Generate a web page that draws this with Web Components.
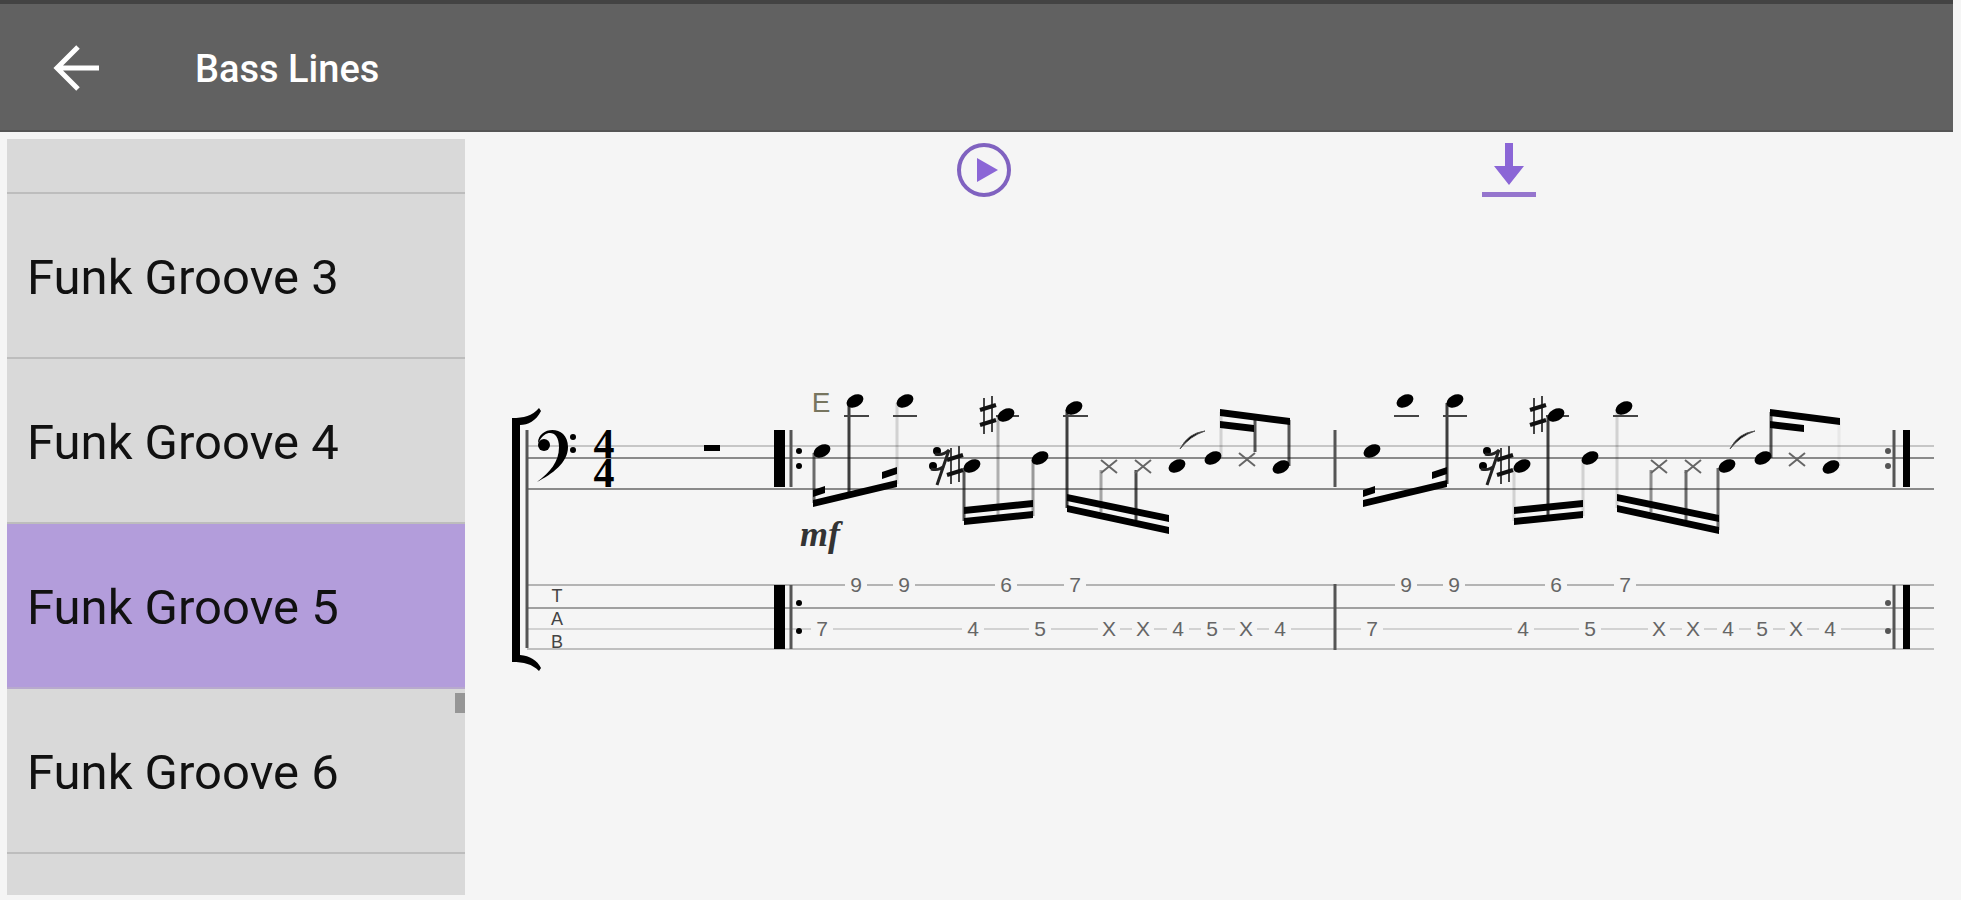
<!DOCTYPE html>
<html lang="en">
<head>
<meta charset="utf-8">
<title>Bass Lines</title>
<style>
  body { margin: 0; background: #f5f5f5; font-family: Roboto, "Liberation Sans", sans-serif; }
</style>
</head>
<body>
<bass-app></bass-app>

<script>
class AppHeader extends HTMLElement {
  constructor() {
    super();
    this.attachShadow({ mode: 'open' });
    this.shadowRoot.innerHTML = `
      <style>
        :host {
          display: flex;
          align-items: center;
          box-sizing: border-box;
          height: 132px;
          margin-right: 8px;
          padding: 4px 0 0 48px;
          gap: 91px;
          background: #616161;
          border-top: 4px solid #434343;
          border-bottom: 2px solid #555;
          color: #fff;
        }
        button { border: 0; padding: 0; background: none; width: 56px; height: 56px; }
        svg { display: block; }
        h1 { margin: 0; font-size: 38px; line-height: 44px; font-weight: 500; }
      </style>
      <button aria-label="Back">
        <svg width="56" height="56" viewBox="0 0 56 56" fill="none" stroke="#fff" stroke-width="5">
          <path d="M51 27H9M30 6L9 27l21 21"/>
        </svg>
      </button>
      <h1><slot></slot></h1>
    `;
  }
}

class GrooveItem extends HTMLElement {
  constructor() {
    super();
    this.attachShadow({ mode: 'open' });
    this.shadowRoot.innerHTML = `
      <style>
        :host { display: block; flex: none; border-bottom: 2px solid #bdbdbd; }
        :host([selected]) { background: #b39ddb; border-color: #b8aacd; }
        button {
          display: block;
          width: 100%;
          height: 163px;
          padding: 4px 20px 0;
          border: 0;
          background: none;
          color: #111;
          font: inherit;
          font-size: 49px;
          line-height: 56px;
          text-align: left;
        }
      </style>
      <button><slot></slot></button>
    `;
  }
}

class GrooveList extends HTMLElement {
  constructor() {
    super();
    this.attachShadow({ mode: 'open' });
    this.shadowRoot.innerHTML = `
      <style>
        :host {
          position: relative;
          display: flex;
          flex-direction: column;
          overflow: hidden;
          background: #d9d9d9;
        }
        .edge { flex: none; height: 53px; border-bottom: 2px solid #bdbdbd; }
        .thumb { position: absolute; right: 0; bottom: 182px; width: 10px; height: 20px; background: #969696; }
      </style>
      <div class="edge"></div>
      <slot></slot>
      <div class="thumb"></div>
    `;
  }
}

class PlayerTools extends HTMLElement {
  constructor() {
    super();
    this.attachShadow({ mode: 'open' });
    this.shadowRoot.innerHTML = `
      <style>
        :host { display: flex; justify-content: space-around; padding: 0 190px 0 256px; }
        button { border: 0; padding: 0; background: none; width: 60px; height: 62px; }
        svg { display: block; }
      </style>
      <button aria-label="Play">
        <svg width="60" height="62" viewBox="0 0 60 62">
          <circle cx="30" cy="31" r="25" fill="none" stroke="#8062c0" stroke-width="4"/>
          <path d="M23 19v24l21-12z" fill="#8b66d6"/>
        </svg>
      </button>
      <button aria-label="Download">
        <svg width="60" height="62" viewBox="0 0 60 62" fill="#8b66d6">
          <path d="M26 4h8v23h11L30 46 15 27h11z"/>
          <path d="M3 53h54v5H3z" fill="#9575cd"/>
        </svg>
      </button>
    `;
  }
}

// x offset of the second bar from the first
const BAR = 550;

// notehead centres, then x heads
const HEADS = [[822, 451], [855, 401], [905, 401], [972, 466], [1006, 415], [1040, 458],
  [1074, 408], [1177, 466], [1213, 458], [1281, 467]];
const GHOSTS = [[1109, 466], [1143, 466], [1247, 459]];

// x, top, bottom, opacity in bar 1, opacity in bar 2
const STEMS = [
  [814, 453, 503, .6, 0], [849, 401, 494, .8, 0], [897, 403, 484, .15, .8],
  [964, 468, 521, .7, .15], [998, 417, 516, .3, .8], [1033, 460, 516, .4, .15],
  [1067, 410, 508, .8, .15], [1101, 470, 512, .35, .45], [1136, 470, 520, .75, .6],
  [1168, 468, 530, 0, .6], [1221, 412, 458, .15, .7], [1255, 418, 452, .7, 0],
  [1289, 420, 466, .7, .05]
];

// x1, y1, x2, y2
const BEAMS = [
  [813, 503, 897, 483], [813, 493, 825, 489], [882, 475, 897, 470],
  [964, 510, 1033, 503], [964, 521, 1033, 514],
  [1067, 497, 1169, 518], [1067, 508, 1169, 530],
  [1220, 412, 1290, 421], [1220, 424, 1254, 428]
];

const LEDGERS = [[844, 869], [893, 917], [996, 1019], [1063, 1088]];

const FRETS = [[822, 1, '7'], [856, 0, '9'], [904, 0, '9'], [973, 1, '4'], [1006, 0, '6'],
  [1040, 1, '5'], [1075, 0, '7'], [1109, 1, 'X'], [1143, 1, 'X'], [1178, 1, '4'],
  [1212, 1, '5'], [1246, 1, 'X'], [1280, 1, '4']];

function sharp(x, y) {
  return `<g transform="translate(${x} ${y})">
    <path d="M-4 -17V19M4 -19V17" stroke="#444" stroke-width="2"/>
    <path d="M-8 -5L8 -10M-8 10L8 5" stroke="#111" stroke-width="4"/>
  </g>`;
}

function drawBar(index) {
  const stems = STEMS.map(s => `<path d="M${s[0]} ${s[1]}V${s[2]}" stroke="#111" stroke-width="3" opacity="${s[3 + index]}"/>`);
  const beams = BEAMS.map(([x1, y1, x2, y2]) => `<path d="M${x1} ${y1 - 3}L${x2} ${y2 - 3}V${y2 + 4}L${x1} ${y1 + 4}z"/>`);
  const ledgers = LEDGERS.map(([a, b]) => `<path d="M${a} 416H${b}" stroke="#444" stroke-width="2"/>`);
  const heads = HEADS.map(([x, y]) => `<ellipse rx="9" ry="6" transform="translate(${x} ${y}) rotate(-28)"/>`);
  const ghosts = GHOSTS.map(([x, y]) => `<path d="M${x - 8} ${y - 6}l16 13m0 -13l-16 13" stroke="#666" stroke-width="2"/>`);
  const frets = FRETS.map(([x, row, t]) => {
    const y = row ? 628 : 584;
    return `<path d="M${x - 11} ${y - 4}h22v9h-22z" fill="#f5f5f5"/>
      <text x="${x}" y="${y + 8}" class="fret">${t}</text>`;
  });
  return `<g transform="translate(${index * BAR} 0)">
    ${stems.join('')}${beams.join('')}${ledgers.join('')}${heads.join('')}${ghosts.join('')}
    ${sharp(988, 415)}${sharp(955, 465)}
    <circle cx="937" cy="451" r="4"/><circle cx="933" cy="466" r="4"/>
    <path d="M935 454Q943 456 949 450L937 485M931 469Q939 471 944 466" fill="none" stroke="#222" stroke-width="3"/>
    <path d="M1180 449Q1188 433 1205 431Q1190 436 1180 449z" stroke="#555"/>
    ${frets.join('')}
  </g>`;
}

class BassScore extends HTMLElement {
  constructor() {
    super();
    this.attachShadow({ mode: 'open' });
    const lines = [[446, .22], [458, .5], [489, .5], [585, .3], [608, .4], [629, .16], [649, .25]]
      .map(([y, o]) => `<path d="M527 ${y}H1934" stroke="#222" stroke-width="2" opacity="${o}"/>`).join('');
    this.shadowRoot.innerHTML = `
      <style>
        :host { display: block; }
        svg { display: block; width: 100%; height: auto; }
        text { text-anchor: middle; }
        .fret { font: 21px "Liberation Sans", sans-serif; fill: #666; }
        .chord { font: 28px "Liberation Sans", sans-serif; fill: #77755f; }
        .time { font: bold 42px "Liberation Serif", serif; }
        .dynamic { font: italic bold 36px "Liberation Serif", serif; fill: #333; }
        .tab { font: 18px "Liberation Sans", sans-serif; fill: #444; }
      </style>
      <svg viewBox="465 380 1496 300" role="img" aria-label="Funk Groove 5">
        ${lines}
        <path d="M512 418C524 418 532 416 539 408L541 411C536 421 528 425 520 425V655C530 656 537 660 541 668L539 671C532 664 524 662 512 662z"/>
        <path d="M527 430V648" stroke="#555" stroke-width="3"/>
        <circle cx="544" cy="445" r="6"/>
        <path d="M538 443C538 426 568 424 568 447C568 463 552 474 537 482C550 472 559 462 559 447C559 429 545 430 540 440z"/>
        <circle cx="573" cy="437" r="3"/><circle cx="573" cy="450" r="3"/>
        <text x="604" y="458" class="time">4</text>
        <text x="604" y="487" class="time">4</text>
        <path d="M704 445h16v6h-16z"/>
        <text x="557" y="602" class="tab">T</text>
        <text x="557" y="625" class="tab">A</text>
        <text x="557" y="648" class="tab">B</text>
        <path d="M774 430h11v57h-11zM774 585h11v64h-11z"/>
        <path d="M791 430v57M791 585v64M1335 430v57M1335 584v66M1894 430v57M1894 585v64" stroke="#555" stroke-width="3"/>
        <circle cx="799" cy="451" r="3"/><circle cx="799" cy="466" r="3"/>
        <circle cx="799" cy="603" r="3"/><circle cx="799" cy="631" r="3"/>
        <text x="821" y="412" class="chord">E</text>
        <text x="820" y="546" class="dynamic">mf</text>
        ${drawBar(0)}
        ${drawBar(1)}
        <path d="M1903 430h7v57h-7zM1903 585h7v64h-7z"/>
        <g fill="#555">
          <circle cx="1888" cy="451" r="3"/><circle cx="1888" cy="466" r="3"/>
          <circle cx="1888" cy="603" r="3"/><circle cx="1888" cy="631" r="3"/>
        </g>
      </svg>
    `;
  }
}

class BassApp extends HTMLElement {
  constructor() {
    super();
    this.attachShadow({ mode: 'open' });
    const items = [3, 4, 5, 6]
      .map(n => `<groove-item${n === 5 ? ' selected' : ''}>Funk Groove ${n}</groove-item>`).join('');
    this.shadowRoot.innerHTML = `
      <style>
        :host { display: flex; flex-direction: column; height: 100vh; }
        .content { flex: 1; min-height: 0; display: flex; padding: 7px 0 5px 7px; }
        groove-list { flex: 0 0 458px; }
        main { flex: 1; min-width: 0; display: flex; flex-direction: column; gap: 179px; }
      </style>
      <app-header>Bass Lines</app-header>
      <div class="content">
        <groove-list>${items}</groove-list>
        <main>
          <player-tools></player-tools>
          <bass-score></bass-score>
        </main>
      </div>
    `;
  }
}

customElements.define('app-header', AppHeader);
customElements.define('groove-item', GrooveItem);
customElements.define('groove-list', GrooveList);
customElements.define('player-tools', PlayerTools);
customElements.define('bass-score', BassScore);
customElements.define('bass-app', BassApp);
</script>
</body>
</html>
